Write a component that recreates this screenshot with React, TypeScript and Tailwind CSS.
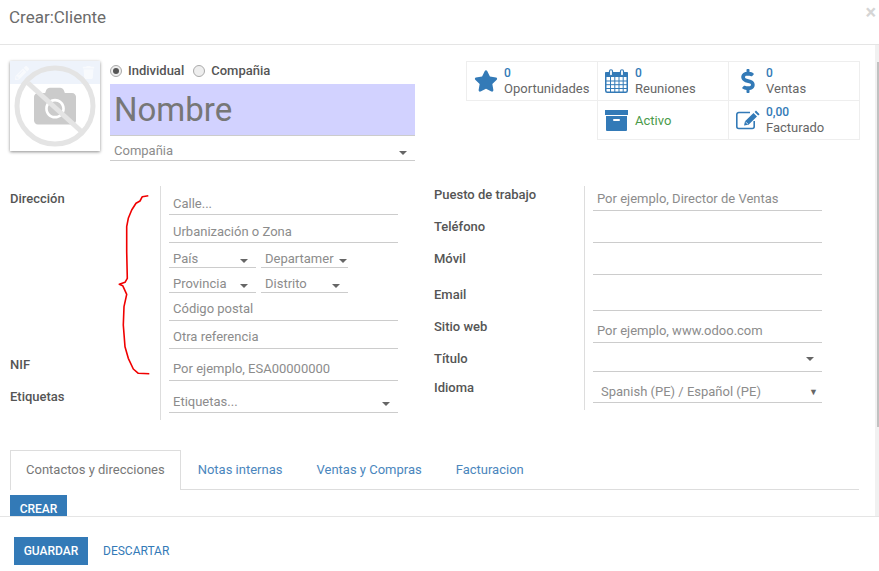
import { FaCamera, FaDollarSign, FaPencilAlt, FaStar, FaTrash } from 'react-icons/fa'

function Caret({ className = '' }: { className?: string }) {
  return <span className={`ml-auto h-0 w-0 border-x-[4px] border-t-[4px] border-x-transparent border-t-[#666] ${className}`} />
}

function Field({ text, h, caret, className = '' }: { text?: string; h: string; caret?: boolean; className?: string }) {
  return (
    <div className={`flex items-center border-b border-[#ccc] pl-1 pr-2 text-[#8c8c8c] ${h} ${className}`}>
      <span className="whitespace-nowrap">{text}</span>
      {caret && <Caret className="mt-1 shrink-0" />}
    </div>
  )
}

function Stat({ icon, value, label, className = '' }: { icon: React.ReactNode; value: string; label: string; className?: string }) {
  return (
    <div className={`flex h-[40px] w-[132px] items-center border border-[#eee] ${className}`}>
      <span className="flex w-[37px] shrink-0 justify-center text-[#337ab7]">{icon}</span>
      <div className="leading-[15px]">
        <div className="text-[12px] font-medium text-[#337ab7]">{value}</div>
        <div className="text-[#666]">{label}</div>
      </div>
    </div>
  )
}

function Label({ children, h }: { children: string; h: string }) {
  return <div className={`font-medium text-[#555] ${h}`}>{children}</div>
}

function Radio({ on }: { on?: boolean }) {
  return (
    <span className="flex h-[12px] w-[12px] items-center justify-center rounded-full border border-[#aaa] bg-[#eee]">
      {on && <span className="h-[6px] w-[6px] rounded-full bg-[#555]" />}
    </span>
  )
}

function CalendarIcon() {
  return (
    <svg width="23" height="24" viewBox="0 0 23 24" fill="none" stroke="currentColor">
      <rect x="0.75" y="3.75" width="21.5" height="19.5" rx="1.5" strokeWidth="1.5" />
      <rect x="0" y="3" width="23" height="5" rx="1" fill="currentColor" stroke="none" />
      <rect x="4.5" y="0.75" width="3" height="6" rx="1.5" fill="white" strokeWidth="1.2" />
      <rect x="15.5" y="0.75" width="3" height="6" rx="1.5" fill="white" strokeWidth="1.2" />
      <path d="M5.5 8v15M9.8 8v15M14 8v15M18.2 8v15M1 12h21M1 15.7h21M1 19.5h21" strokeWidth="1" />
    </svg>
  )
}

function ArchiveIcon() {
  return (
    <svg width="23" height="21" viewBox="0 0 23 21" fill="currentColor">
      <rect x="0" y="0" width="23" height="5" />
      <path d="M1 6h21v14a1 1 0 0 1-1 1H2a1 1 0 0 1-1-1z" />
      <rect x="8" y="9" width="7" height="2" rx="1" fill="white" />
    </svg>
  )
}

function EditIcon() {
  return (
    <svg width="24" height="20" viewBox="0 0 24 20" fill="none">
      <path d="M18.2 11v5.5a2 2 0 0 1-2 2H2.8a2 2 0 0 1-2-2V4.5a2 2 0 0 1 2-2H14" stroke="currentColor" strokeWidth="1.6" />
      <path d="M8 15.5L9 11.2L17.5 3L21 6.6L12.5 14.8z M18.6 2L20 0.6L23.6 4.2L22.2 5.6z" fill="currentColor" />
      <path d="M9.6 12L12 14.2" stroke="white" strokeWidth="0.8" />
    </svg>
  )
}

function Photo() {
  return (
    <div className="relative h-[90px] w-[90px] shrink-0 overflow-hidden bg-white shadow-[0_1px_3px_rgba(0,0,0,0.45)]">
      <div className="flex h-[23px] items-center justify-between bg-[#eef3fb] px-[5px] text-[#f8fafd]">
        <FaPencilAlt size={14} />
        <FaTrash size={13} />
      </div>
      <FaCamera size={42} className="absolute left-[24px] top-[24px] text-[#cbcbcb]" />
      <svg className="absolute left-0 top-0" width="90" height="90" viewBox="0 0 90 90" fill="none">
        <circle cx="45" cy="45" r="38" stroke="#e4e4e4" strokeWidth="5" />
        <path d="M18 22 L72 71" stroke="#e4e4e4" strokeWidth="5" />
      </svg>
    </div>
  )
}

export default function App() {
  return (
    <div className="relative flex h-[571px] w-[879px] flex-col overflow-hidden bg-white font-['Roboto',sans-serif] text-[13px] leading-[18px] text-[#666]">
      <header className="flex h-[45px] shrink-0 border-b border-[#e5e5e5] pl-[9px] pr-[3px]">
        <h1 className="mt-[8px] text-[17px] leading-[19px] text-[#6b6b6b]">Crear:Cliente</h1>
        <span className="ml-auto text-[20px] font-bold leading-[24px] text-[#d5d5d5]">×</span>
      </header>

      <main className="relative min-h-0 flex-1 overflow-hidden pl-[10px]">
        {/* scrollbar */}
        <div className="absolute bottom-0 right-0 top-0 w-[4px] bg-[#f1f1f1]">
          <div className="ml-[2px] mt-[17px] h-[365px] w-[2px] bg-[#c1c1c1]" />
        </div>

        <div className="flex h-[141px] pt-[16px]">
          <Photo />
          <div className="ml-[10px] w-[305px]">
            <div className="flex h-[23px] items-center pb-[4px] font-medium text-[#555]">
              <Radio on />
              <span className="ml-[6px]">Individual</span>
              <span className="ml-[9px]"><Radio /></span>
              <span className="ml-[6px]">Compañia</span>
            </div>
            <div className="h-[52px] border-b border-[#ccc] bg-[#d2d2ff] pl-[4px] text-[33px] leading-[52px] text-[#777]">Nombre</div>
            <Field text="Compañia" h="h-[25px]" caret className="pt-[6px]" />
          </div>
          <div className="ml-[51px] flex w-[394px] flex-wrap content-start">
            <Stat icon={<FaStar size={24} />} value="0" label="Oportunidades" />
            <Stat icon={<CalendarIcon />} value="0" label="Reuniones" className="-ml-px" />
            <Stat icon={<FaDollarSign size={24} />} value="0" label="Ventas" className="-ml-px" />
            <div className="-mt-px ml-[131px] flex h-[40px] w-[132px] items-center border border-[#eee] pt-px">
              <span className="flex w-[37px] shrink-0 justify-center text-[#337ab7]"><ArchiveIcon /></span>
              <span className="text-[#4a9a4a]">Activo</span>
            </div>
            <Stat icon={<EditIcon />} value="0,00" label="Facturado" className="-ml-px -mt-px" />
          </div>
        </div>

        <div className="flex">
          {/* left column */}
          <div className="flex w-[388px]">
            <div className="w-[150px] shrink-0">
              <Label h="h-[170px] pt-[4px]">Dirección</Label>
              <Label h="h-[32px]">NIF</Label>
              <Label h="h-[32px]">Etiquetas</Label>
            </div>
            <div className="h-[234px] w-[238px] border-l border-[#ddd] pl-[8px]">
              <Field text="Calle..." h="h-[29px] pt-[8px]" />
              <Field text="Urbanización o Zona" h="h-[28px] pt-[6px]" />
              <div className="flex gap-[5px]">
                <Field text="País" h="h-[25px] w-[87px] pt-[7px]" caret />
                <Field text="Departamer" h="h-[25px] w-[87px] pt-[7px]" caret className="!pr-[1px]" />
              </div>
              <div className="flex gap-[5px]">
                <Field text="Provincia" h="h-[25px] w-[87px] pt-[7px]" caret />
                <Field text="Distrito" h="h-[25px] w-[87px] pt-[7px]" caret />
              </div>
              <Field text="Código postal" h="h-[28px] pt-[5px]" />
              <Field text="Otra referencia" h="h-[28px] pt-[5px]" />
              <Field text="Por ejemplo, ESA00000000" h="h-[32px] pt-[8px]" />
              <Field text="Etiquetas..." h="h-[32px] pt-[10px]" caret />
            </div>
          </div>

          {/* right column */}
          <div className="ml-[36px] flex w-[388px]">
            <div className="w-[150px] shrink-0">
              <Label h="h-[32px]">Puesto de trabajo</Label>
              <Label h="h-[32px]">Teléfono</Label>
              <Label h="h-[36px]">Móvil</Label>
              <Label h="h-[32px]">Email</Label>
              <Label h="h-[32px]">Sitio web</Label>
              <Label h="h-[29px]">Título</Label>
              <Label h="h-[31px]">Idioma</Label>
            </div>
            <div className="h-[224px] w-[238px] border-l border-[#ddd] pl-[8px]">
              <Field text="Por ejemplo, Director de Ventas" h="h-[25px] pt-[2px]" />
              <Field h="h-[32px]" />
              <Field h="h-[32px]" />
              <Field h="h-[36px]" />
              <Field text="Por ejemplo, www.odoo.com" h="h-[32px] pt-[8px]" />
              <Field h="h-[29px]" caret />
              <div className="flex h-[31px] items-center border-b border-[#ccc] pl-[8px] pr-[4px] pt-[9px] text-[#8c8c8c]">
                Spanish (PE) / Español (PE)
                <span className="ml-auto text-[9px] text-[#666]">▼</span>
              </div>
            </div>
          </div>
        </div>

        {/* tabs */}
        <div className="mr-[20px] mt-[30px] flex h-[40px] border-b border-[#ddd]">
          <div className="h-[40px] border-x border-t border-[#ddd] bg-white px-[15px] pt-[10px] text-[#777]">Contactos y direcciones</div>
          <div className="px-[17px] pt-[11px] text-[#4a86bd]">Notas internas</div>
          <div className="px-[17px] pt-[11px] text-[#4a86bd]">Ventas y Compras</div>
          <div className="px-[17px] pt-[11px] text-[#4a86bd]">Facturacion</div>
        </div>
        <button className="mt-[5px] h-[28px] w-[57px] bg-[#337ab7] text-[12px] font-medium text-white">CREAR</button>
      </main>

      <footer className="flex h-[55px] shrink-0 items-start gap-[15px] border-t border-[#e5e5e5] pl-[14px] pt-[20px]">
        <button className="h-[28px] w-[74px] bg-[#337ab7] text-[12px] font-medium text-white">GUARDAR</button>
        <button className="h-[28px] text-[12px] text-[#337ab7]">DESCARTAR</button>
      </footer>

      <svg className="pointer-events-none absolute left-0 top-0" width="879" height="571" fill="none">
        <path d="M148.3 195.7 L142.3 196.7 L140 201 L136 203.3 L131.7 210 L128.3 218.3 L126.7 226.7 L126.7 251.7 L127.3 278.3 L125 282.3 L119.3 284.3 L122.7 285.7 L126.7 294.3 L124 306.7 L123.3 325 L125 346.7 L128.3 358.3 L133.3 369 L138.3 373.3 L149.3 373.7" stroke="#f00000" strokeWidth="1.6" strokeLinejoin="round" />
      </svg>
    </div>
  )
}
